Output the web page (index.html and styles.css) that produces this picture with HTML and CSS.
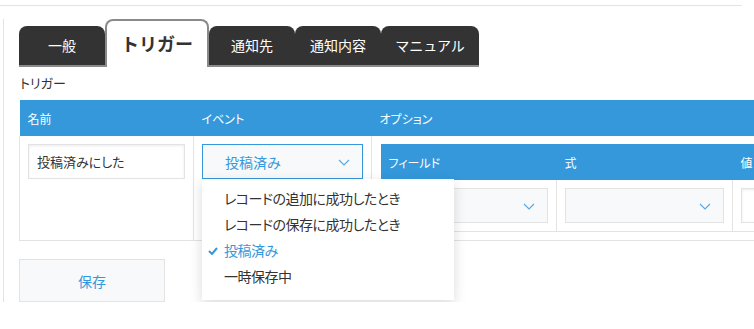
FILE: index.html
```html
<!DOCTYPE html>
<html lang="ja">
<head>
    <meta charset="UTF-8">
    <title>トリガー設定</title>
    <link rel="stylesheet" href="styles.css">
</head>
<body>
    <div class="topline"></div>

    <div class="settings">
        <!-- Tabs -->
        <div class="tabs">
            <div class="tab">一般</div>
            <div class="tab active">トリガー</div>
            <div class="tab">通知先</div>
            <div class="tab">通知内容</div>
            <div class="tab">マニュアル</div>
        </div>

        <div class="section-label">トリガー</div>

        <table class="grid">
            <thead>
                <tr>
                    <th class="col-name">名前</th>
                    <th class="col-event">イベント</th>
                    <th>オプション</th>
                </tr>
            </thead>
            <tbody>
                <tr>
                    <td><input class="text-input" type="text" value="投稿済みにした"></td>
                    <td class="event-cell">
                        <div class="select focused">
                            <span class="select-value">投稿済み</span>
                            <svg class="chevron" width="12" height="7" viewBox="0 0 12 7"><path d="M1 1l5 5 5-5" fill="none" stroke="#5aa9e0" stroke-width="1.2"/></svg>
                        </div>
                        <!-- open dropdown menu -->
                        <ul class="menu">
                            <li>レコードの追加に成功したとき</li>
                            <li>レコードの保存に成功したとき</li>
                            <li class="selected">
                                <svg class="check" width="10" height="8" viewBox="0 0 10 8"><path d="M1 4l3 3 5-6" fill="none" stroke="#3498db" stroke-width="2"/></svg>
                                投稿済み
                            </li>
                            <li>一時保存中</li>
                        </ul>
                    </td>
                    <td class="options-cell">
                        <table class="grid inner">
                            <thead>
                                <tr>
                                    <th class="col-field">フィールド</th>
                                    <th class="col-op">式</th>
                                    <th>値</th>
                                </tr>
                            </thead>
                            <tbody>
                                <tr>
                                    <td>
                                        <div class="select">
                                            <span class="select-value"></span>
                                            <svg class="chevron" width="12" height="7" viewBox="0 0 12 7"><path d="M1 1l5 5 5-5" fill="none" stroke="#5aa9e0" stroke-width="1.2"/></svg>
                                        </div>
                                    </td>
                                    <td>
                                        <div class="select">
                                            <span class="select-value"></span>
                                            <svg class="chevron" width="12" height="7" viewBox="0 0 12 7"><path d="M1 1l5 5 5-5" fill="none" stroke="#5aa9e0" stroke-width="1.2"/></svg>
                                        </div>
                                    </td>
                                    <td><input class="text-input" type="text" value=""></td>
                                </tr>
                            </tbody>
                        </table>
                    </td>
                </tr>
            </tbody>
        </table>

        <button class="save-btn">保存</button>
    </div>
</body>
</html>
```

FILE: styles.css
```css
body {
    margin: 0;
    font-family: "Noto Sans CJK JP", "Noto Sans", sans-serif;
    font-feature-settings: "palt";
    color: #333;
    overflow: hidden;
}
.topline {
    margin-top: 5px;
    width: 742px;
    height: 1px;
    background-color: #e3e3e3;
}
.settings {
    margin: 13px 0 0 3px;
    padding-left: 15px;
    border-left: 1px solid #e3e3e3;
    overflow: hidden;
}
.tabs {
    display: flex;
    align-items: flex-end;
    height: 48px;
}
.tab {
    min-width: 86px;
    box-sizing: border-box;
    height: 41px;
    padding: 0 14px;
    background-color: #333;
    color: #fff;
    font-size: 14px;
    font-feature-settings: normal;
    line-height: 39px;
    text-align: center;
    border-radius: 8px 8px 0 0;
    border-bottom: 2px solid #8a8a8a;
}
.tab.active {
    min-width: 102px;
    height: 48px;
    background-color: #fff;
    color: #333;
    font-size: 18px;
    font-weight: bold;
    line-height: 44px;
    border: 2px solid #8a8a8a;
    border-bottom: none;
}
.tab:last-child {
    min-width: 98px;
}
.section-label {
    font-size: 13px;
    line-height: 16px;
    margin: 8px 0 9px 1px;
}
.grid {
    border-collapse: collapse;
    table-layout: fixed;
    width: 1000px;
}
.grid th {
    background-color: #3498db;
    color: #fff;
    font-size: 12px;
    font-weight: normal;
    text-align: left;
    height: 36px;
    padding: 0 8px;
}
.grid td {
    vertical-align: top;
    padding: 8px;
    border: 1px solid #e3e3e3;
    border-top: none;
    height: 86px;
}
.col-name {
    width: 158px;
}
.col-event {
    width: 162px;
}
.inner {
    width: 540px;
}
.inner td {
    height: 35px;
}
.col-field {
    width: 160px;
}
.col-op {
    width: 160px;
}
.options-cell {
    border-right: none;
}
.text-input {
    box-sizing: border-box;
    width: 100%;
    height: 35px;
    padding: 0 8px;
    border: 1px solid #e3e3e3;
    box-shadow: inset 0 1px 3px rgba(0, 0, 0, 0.08);
    font-family: inherit;
    font-feature-settings: "palt";
    font-size: 13px;
    color: #333;
}
.select {
    box-sizing: border-box;
    height: 35px;
    display: flex;
    align-items: center;
    justify-content: space-between;
    padding: 0 12px 0 22px;
    background-color: #f7f9fa;
    border: 1px solid #e3e3e3;
}
.select.focused {
    border-color: #3498db;
}
.select-value {
    color: #3498db;
    font-size: 14px;
}
.chevron {
    margin-top: 2px;
}
.event-cell {
    position: relative;
}
.menu {
    position: absolute;
    top: 43px;
    left: 8px;
    width: 252px;
    margin: 0;
    padding: 6px 0 11px;
    list-style: none;
    background-color: #fff;
    box-shadow: 0 4px 12px rgba(0, 0, 0, 0.15);
    z-index: 10;
}
.menu li {
    position: relative;
    height: 26px;
    line-height: 26px;
    padding-left: 22px;
    font-size: 14px;
    letter-spacing: -0.5px;
}
.menu li.selected {
    color: #3498db;
}
.check {
    position: absolute;
    left: 6px;
    top: 10px;
}
.save-btn {
    display: block;
    margin-top: 18px;
    width: 146px;
    height: 43px;
    background-color: #f7f9fa;
    border: 1px solid #e3e3e3;
    color: #3498db;
    font-family: inherit;
    font-size: 14px;
}
```
